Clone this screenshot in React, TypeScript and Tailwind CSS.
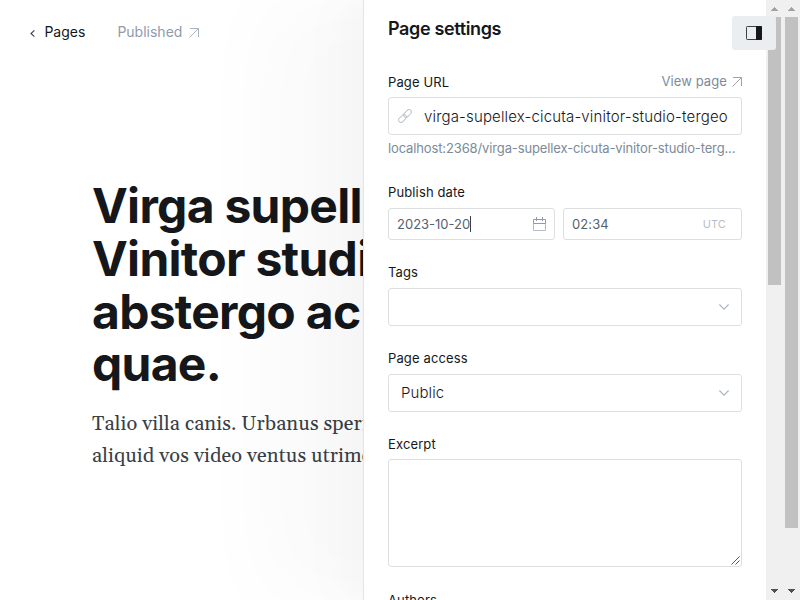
import React from 'react';

function ArrowOut({ className }: { className: string }) {
  return (
    <svg className={className} viewBox="0 0 10 10" fill="none" stroke="currentColor" strokeWidth="1">
      <path d="M1 .5h8.5V9M9.3.7.5 9.5" />
    </svg>
  );
}

function ChevronDown() {
  return (
    <svg className="h-[6px] w-[10px] text-[#aab4bd]" viewBox="0 0 10 6" fill="none" stroke="currentColor" strokeWidth="1.1">
      <path d="M.4.5 5 5.1 9.6.5" />
    </svg>
  );
}

function Scrollbar({ thumb }: { thumb: string }) {
  return (
    <div className="flex h-[600px] w-[17px] shrink-0 flex-col items-center bg-[#f0f0f0]">
      <svg className="h-[17px] w-[17px] shrink-0" viewBox="0 0 17 17" shapeRendering="crispEdges">
        <path d="M5 11h7v-1h-1V9h-1V8H9V7H8v1H7v1H6v1H5z" fill="#a3a3a3" />
      </svg>
      <div className={thumb} />
      <svg className="mt-auto h-[17px] w-[17px] shrink-0" viewBox="0 0 17 17" shapeRendering="crispEdges">
        <path d="M5 6h7v1h-1v1h-1v1H9v1H8V9H7V8H6V7H5z" fill="#505050" />
      </svg>
    </div>
  );
}

function Label({ children }: { children: React.ReactNode }) {
  return <div className="h-5 text-[13px] leading-5 tracking-[0.13px] text-[#15171a]">{children}</div>;
}

export default function App() {
  return (
    <div className="relative flex h-[600px] w-[800px] overflow-hidden bg-white font-['Inter',sans-serif]">
      <main className="w-[363px] shrink-0 overflow-hidden">
        <header className="flex h-16 items-center pl-[30px] text-[14px]">
          <svg className="mt-[3px] h-[7px] w-[5px] text-[#394047]" viewBox="0 0 5 7" fill="none" stroke="currentColor" strokeWidth="1.1">
            <path d="M4.4.4 1 3.5l3.4 3.1" />
          </svg>
          <span className="mb-[2px] ml-[9.4px] w-[73px] text-[#15171a]">Pages</span>
          <span className="mb-[2px] text-[#8e9cac]">Published</span>
          <ArrowOut className="ml-[7px] mt-[2px] h-[10px] w-[10px] text-[#abb4be]" />
        </header>
        <div className="w-[363px] pl-[92px] pt-[116px]">
          <h1 className="text-[48px] leading-[52.8px] font-bold tracking-[-0.72px] whitespace-nowrap text-[#15171a]">
            Virga supelle
            <br />
            Vinitor studi
            <br />
            abstergo ac
            <br />
            quae.
          </h1>
          <p className="mt-[17px] font-[Georgia,Gelasio,serif] text-[20px] leading-8 tracking-[0.1px] whitespace-nowrap text-[#394047]">
            Talio villa canis. Urbanus speri
            <br />
            aliquid vos video ventus utrimq
          </p>
        </div>
      </main>

      <aside className="z-10 flex h-[600px] w-[420px] shrink-0 border-l border-[#e3e4e6] bg-white shadow-[-2.8px_0_2.2px_rgba(0,0,0,0.003),-6.7px_0_5.3px_rgba(0,0,0,0.005),-12.5px_0_10px_rgba(0,0,0,0.007),-22.3px_0_17.9px_rgba(0,0,0,0.009),-41.8px_0_33.4px_rgba(0,0,0,0.013),-100px_0_80px_rgba(0,0,0,0.024)]">
        <div className="h-[600px] w-[402px] overflow-hidden px-6">
          <h2 className="pt-[17px] text-[18px] leading-6 font-semibold tracking-[-0.36px] text-[#15171a]">Page settings</h2>

          <section className="mt-[30px]">
            <div className="flex items-center justify-between">
              <Label>Page URL</Label>
              <div className="mb-[2px] flex items-center text-[13px] leading-5 tracking-[0.1px] text-[#7c8b9a]">
                View page
                <ArrowOut className="mt-px ml-[5px] h-[10px] w-[10px] text-[#98a4b0]" />
              </div>
            </div>
            <div className="mt-1 flex h-[38px] items-center overflow-hidden rounded-[3px] border border-[#dddfe1] pl-[9px]">
              <svg className="h-[14px] w-[14px] shrink-0 text-[#c0c5ca]" viewBox="0 0 14 14" fill="none" stroke="currentColor" strokeWidth="1">
                <g transform="rotate(-45 7 7)">
                  <rect x="-1" y="4.6" width="9" height="4.8" rx="2.4" />
                  <rect x="6" y="4.6" width="9" height="4.8" rx="2.4" />
                </g>
              </svg>
              <span className="mt-[2px] ml-[12px] text-[15px] font-light tracking-[0.16px] whitespace-nowrap text-[#15171a]">
                virga-supellex-cicuta-vinitor-studio-tergeo
              </span>
            </div>
            <p className="mt-[3px] h-5 text-[13px] leading-5 tracking-[-0.13px] whitespace-nowrap text-[#7c8b9a]">
              localhost:2368/virga-supellex-cicuta-vinitor-studio-terg...
            </p>
          </section>

          <section className="mt-6">
            <Label>Publish date</Label>
            <div className="mt-[6px] flex gap-2">
              <div className="flex h-8 w-[167px] items-center rounded-[3px] border border-[#dddfe1] pr-[8px] pl-[8px] text-[13px] text-[#54626f]">
                <span className="mt-px">2023-10-20</span>
                <span className="h-4 w-px bg-[#394047]" />
                <svg className="ml-auto h-[14px] w-[13px]" viewBox="0 0 13 14" fill="none">
                  <path d="M.5 6v7.5h12V6" stroke="#b4bdc6" />
                  <path d="M.5 6.5v-4h12v4zM3.5 0v4M9.5 0v4" stroke="#8e9cac" />
                </svg>
              </div>
              <div className="flex h-8 flex-1 items-center justify-between rounded-[3px] border border-[#dddfe1] pr-[15px] pl-[8px] text-[13px] tracking-[0.1px] text-[#54626f]">
                <span className="mt-px">02:34</span>
                <span className="text-[11px] text-[#b6bec7]">UTC</span>
              </div>
            </div>
          </section>

          <section className="mt-[22px]">
            <Label>Tags</Label>
            <div className="mt-[6px] flex h-[38px] items-center justify-end rounded-[3px] border border-[#dddfe1] pr-[12px]">
              <ChevronDown />
            </div>
          </section>

          <section className="mt-[22px]">
            <Label>Page access</Label>
            <div className="mt-[6px] flex h-[38px] items-center justify-between rounded-[3px] border border-[#dddfe1] pr-[12px] pl-[12px] text-[15px] font-light tracking-[0.1px] text-[#15171a]">
              Public
              <ChevronDown />
            </div>
          </section>

          <section className="mt-[22px]">
            <Label>Excerpt</Label>
            <div className="mt-[5px] flex h-[108px] items-end justify-end rounded-[3px] border border-[#dddfe1]">
              <svg className="mr-[1px] mb-[1px] h-[9px] w-[9px]" viewBox="0 0 9 9" fill="none" stroke="#555" strokeWidth="1">
                <path d="M.5 8.5 8.5.5M4.5 8.5l4-4" />
              </svg>
            </div>
          </section>

          <section className="mt-[23px]">
            <Label>Authors</Label>
          </section>
        </div>
        <Scrollbar thumb="h-[268px] w-[13px] bg-[#c1c1c1]" />
      </aside>
      <Scrollbar thumb="h-[511px] w-[13px] bg-[#c1c1c1]" />

      <button className="absolute top-4 left-[732px] z-20 flex h-[34px] w-11 items-center justify-center rounded-[3px] bg-[#ebeef0]">
        <svg className="h-[14px] w-4" viewBox="0 0 16 14" fill="none">
          <rect x=".5" y=".5" width="15" height="13" rx=".8" stroke="#394047" />
          <path d="M10 0h5a1 1 0 0 1 1 1v12a1 1 0 0 1-1 1h-5z" fill="#15171a" />
        </svg>
      </button>
    </div>
  );
}
